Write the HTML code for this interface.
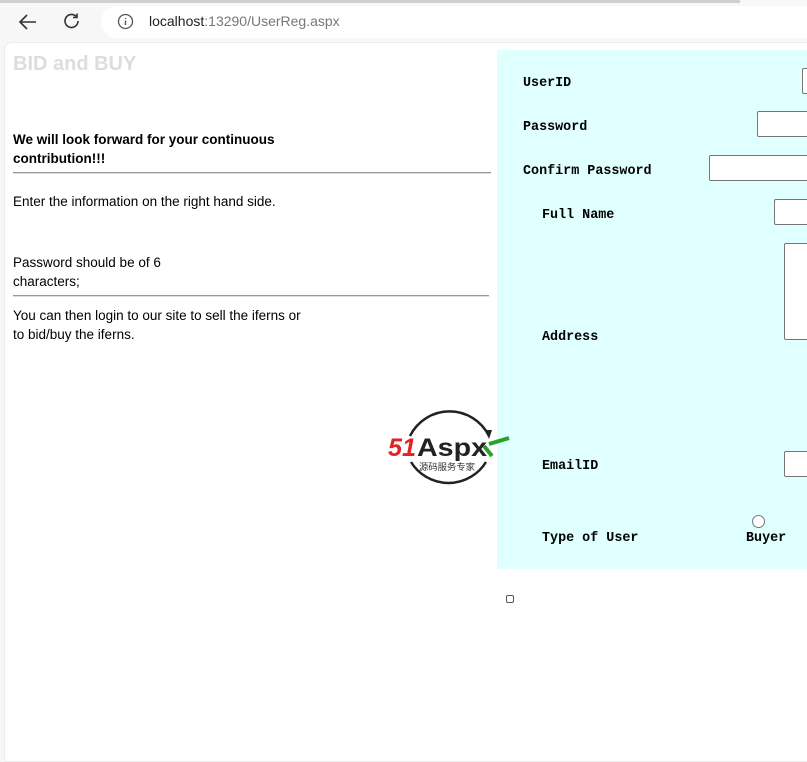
<!DOCTYPE html>
<html><head><meta charset="utf-8"><style>
*{margin:0;padding:0;box-sizing:border-box}
body{width:807px;height:743px;overflow:hidden;background:#f7f7f7;position:relative;font-family:"Liberation Sans",sans-serif}
.abs{position:absolute}
.page{position:absolute;left:4px;top:42px;width:820px;height:720px;background:#fff;border-radius:8px 0 0 0;border:1px solid #ececec}
.url{position:absolute;left:101px;top:6px;width:720px;height:32px;background:#fff;border-radius:16px}
.t{font-size:13.5px;color:#000;line-height:19px;white-space:nowrap}
.lbl{position:absolute;font-family:"Liberation Mono","Noto Sans CJK SC",monospace;font-weight:bold;font-size:13.4px;color:#000}
.in{position:absolute;height:26px;background:#fff;border:1px solid #767676;border-radius:2px;width:100px}
hr{position:absolute;border:0;border-top:1px solid #9a9a9a;border-bottom:1px solid #ddd;height:2px}
</style></head><body>
<div class="abs" style="left:0;top:0;width:807px;height:3px;background:#d0d0d0"></div>
<div class="abs" style="left:740px;top:0;width:67px;height:3px;background:#f7f7f7"></div>
<svg class="abs" style="left:17px;top:12px" width="22" height="20" viewBox="0 0 22 20"><path d="M19 10H3M10 3L3 10l7 7" fill="none" stroke="#333" stroke-width="1.6"/></svg>
<svg class="abs" style="left:62px;top:11px" width="20" height="20" viewBox="0 0 20 20"><path d="M16 10a6.5 6.5 0 1 1-2-4.7M15 2.5v4h-4" fill="none" stroke="#333" stroke-width="1.6"/></svg>
<div class="url"></div>
<svg class="abs" style="left:117px;top:13px" width="17" height="17" viewBox="0 0 17 17"><circle cx="8.5" cy="8.5" r="7" fill="none" stroke="#555" stroke-width="1.3"/><path d="M8.5 7.5v4.5M8.5 5v1" stroke="#555" stroke-width="1.4"/></svg>
<div class="abs" style="left:149px;top:13px;font-size:14px;color:#222">localhost<span style="color:#777">:13290/UserReg.aspx</span></div>
<div class="page"></div>
<div class="abs" style="left:13px;top:53px;font-size:20px;font-weight:bold;color:#ddd">BID and BUY</div>
<div class="abs t" style="left:13px;top:130px;font-weight:bold">We will look forward for your continuous<br>contribution!!!</div>
<hr style="left:13px;top:172px;width:478px">
<div class="abs t" style="left:13px;top:192px">Enter the information on the right hand side.</div>
<div class="abs t" style="left:13px;top:253px">Password should be of 6<br>characters;</div>
<hr style="left:13px;top:295px;width:476px">
<div class="abs t" style="left:13px;top:306px">You can then login to our site to sell the iferns or<br>to bid/buy the iferns.</div>
<div class="abs" style="left:497px;top:50px;width:310px;height:519px;background:#e0ffff"></div>
<div class="lbl" style="left:523px;top:76px">UserID</div>
<div class="in" style="left:802px;top:68px;height:26px"></div>
<div class="lbl" style="left:523px;top:120px">Password</div>
<div class="in" style="left:757px;top:111px"></div>
<div class="lbl" style="left:523px;top:164px">Confirm Password</div>
<div class="in" style="left:709px;top:155px"></div>
<div class="lbl" style="left:542px;top:208px">Full Name</div>
<div class="in" style="left:774px;top:199px"></div>
<div class="in" style="left:784px;top:243px;height:97px"></div>
<div class="lbl" style="left:542px;top:330px">Address</div>
<div class="lbl" style="left:542px;top:459px">EmailID</div>
<div class="in" style="left:784px;top:451px"></div>
<div class="abs" style="left:752px;top:515px;width:13px;height:13px;border:1px solid #777;border-radius:50%;background:#fff"></div>
<div class="lbl" style="left:746px;top:531px">Buyer</div>
<div class="lbl" style="left:542px;top:531px">Type of User</div>
<div class="abs" style="left:506px;top:595px;width:8px;height:8px;border:1px solid #555;border-radius:2px"></div>
<svg class="abs" style="left:386px;top:400px" width="126" height="96" viewBox="0 0 126 96">
<path d="M24 36A44 44 0 0 1 103 36" fill="none" stroke="#222" stroke-width="2.5"/>
<path d="M100 62A44 44 0 0 1 25 62" fill="none" stroke="#222" stroke-width="2.5"/>
<path d="M99 30l4 9 3-9z" fill="#222"/>
<text x="2" y="56" font-family="Liberation Sans" font-weight="bold" font-style="italic" font-size="25" fill="#e52222" textLength="28" lengthAdjust="spacingAndGlyphs">51</text>
<text x="31" y="56" font-family="Liberation Sans" font-weight="bold" font-size="25" fill="#222" textLength="70" lengthAdjust="spacingAndGlyphs">Aspx</text>
<path d="M103 44l20 -6M106 56l-8-10" stroke="#2aa22a" stroke-width="4"/>
<text x="33" y="70" font-family="Noto Sans CJK SC" font-size="9" fill="#333" textLength="56" lengthAdjust="spacingAndGlyphs">源码服务专家</text>
</svg>
</body></html>
